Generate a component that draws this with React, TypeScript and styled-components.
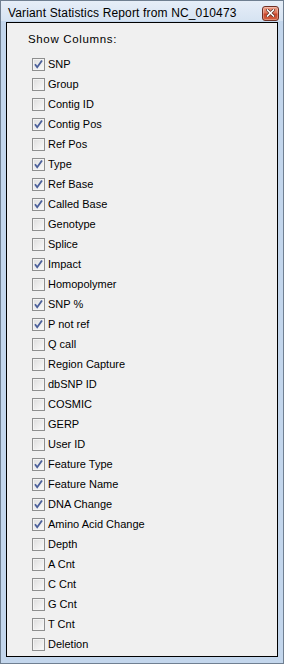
import React from "react";
import styled, { createGlobalStyle } from "styled-components";

const Global = createGlobalStyle`
  html, body { margin: 0; padding: 0; background: #ffffff; }
  body { font-family: "Liberation Sans", Arial, sans-serif; }
`;

const Window = styled.div`
  width: 284px;
  height: 664px;
  box-sizing: border-box;
  border: 1px solid #6f7f91;
  background: #c3d6ec;
  display: flex;
  flex-direction: column;
`;

const TitleBar = styled.div`
  height: 20px;
  flex: none;
  display: flex;
  align-items: center;
  justify-content: space-between;
  padding: 0 4px 0 7px;
  background: linear-gradient(#e6eef8, #d6e3f2);
`;

const Title = styled.span`
  font-family: "Liberation Sans", Arial, sans-serif;
  font-size: 12px;
  letter-spacing: 0.15px;
  color: #000000;
  white-space: nowrap;
  margin-top: 3px;
`;

const CloseButton = styled.div`
  width: 17px;
  height: 15px;
  margin-top: 4px;
  box-sizing: border-box;
  border: 1px solid #6e2f24;
  border-radius: 3px;
  background: linear-gradient(#eea08a 0%, #dd7358 45%, #c8442a 55%, #d4603f 100%);
  box-shadow: inset 0 0 0 1px rgba(255, 255, 255, 0.3);
  display: flex;
  align-items: center;
  justify-content: center;
`;

const Client = styled.div`
  flex: 1;
  margin: 1px 5px 6px 5px;
  border: 1px solid #000000;
  background: #f0f0f0;
  display: flex;
  flex-direction: column;
  padding: 9px 0 0 25px;
`;

const Heading = styled.div`
  font-size: 11.5px;
  letter-spacing: 0.65px;
  color: #000000;
  margin-left: -4px;
  height: 14px;
  line-height: 14px;
  margin-bottom: 8px;
`;

const List = styled.div`
  display: flex;
  flex-direction: column;
`;

const Row = styled.label`
  height: 20px;
  display: flex;
  align-items: center;
  gap: 3px;
  font-size: 11px;
  color: #000000;
`;

const Box = styled.span`
  width: 13px;
  height: 13px;
  box-sizing: border-box;
  border: 1px solid #8e8f8f;
  background: linear-gradient(135deg, #dcdcdc 0%, #ececec 50%, #fbfbfb 100%);
  box-shadow: inset 0 0 0 1px #f4f4f4;
  display: flex;
  align-items: center;
  justify-content: center;
  flex: none;
`;

const Label = styled.span`
  white-space: nowrap;
`;

const Check = () => (
  <svg width="11" height="11" viewBox="0 0 11 11">
    <path
      d="M2 5.2 L4.2 8.2 L9 1.5"
      fill="none"
      stroke="#4a5f9a"
      strokeWidth="1.8"
      strokeLinejoin="miter"
    />
  </svg>
);

const CloseX = () => (
  <svg width="9" height="8" viewBox="0 0 9 8">
    <path d="M1.5 1 L7.5 7 M7.5 1 L1.5 7" stroke="#5a2a20" strokeWidth="3" strokeLinecap="square" />
    <path d="M1.5 1 L7.5 7 M7.5 1 L1.5 7" stroke="#ffffff" strokeWidth="1.6" strokeLinecap="square" />
  </svg>
);

const columns: [string, boolean][] = [
  ["SNP", true],
  ["Group", false],
  ["Contig ID", false],
  ["Contig Pos", true],
  ["Ref Pos", false],
  ["Type", true],
  ["Ref Base", true],
  ["Called Base", true],
  ["Genotype", false],
  ["Splice", false],
  ["Impact", true],
  ["Homopolymer", false],
  ["SNP %", true],
  ["P not ref", true],
  ["Q call", false],
  ["Region Capture", false],
  ["dbSNP ID", false],
  ["COSMIC", false],
  ["GERP", false],
  ["User ID", false],
  ["Feature Type", true],
  ["Feature Name", true],
  ["DNA Change", true],
  ["Amino Acid Change", true],
  ["Depth", false],
  ["A Cnt", false],
  ["C Cnt", false],
  ["G Cnt", false],
  ["T Cnt", false],
  ["Deletion", false],
];

export default function App() {
  return (
    <>
      <Global />
      <Window>
        <TitleBar>
          <Title>Variant Statistics Report from NC_010473</Title>
          <CloseButton>
            <CloseX />
          </CloseButton>
        </TitleBar>
        <Client>
          <Heading>Show Columns:</Heading>
          <List>
            {columns.map(([name, on]) => (
              <Row key={name}>
                <Box>{on && <Check />}</Box>
                <Label>{name}</Label>
              </Row>
            ))}
          </List>
        </Client>
      </Window>
    </>
  );
}
